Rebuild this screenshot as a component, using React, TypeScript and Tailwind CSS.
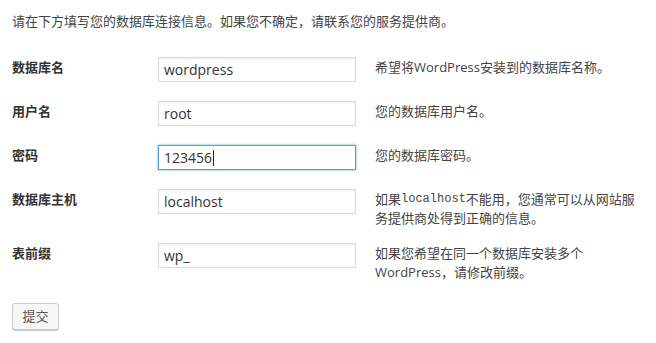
import React from "react";

const font = {
  fontFamily: '"Open Sans", "Noto Sans CJK SC", sans-serif',
};

type Row = {
  label: string;
  value: string;
  focused?: boolean;
  desc: React.ReactNode;
  pb: string;
};

export default function App() {
  const rows: Row[] = [
    { label: "数据库名", value: "wordpress", desc: "希望将WordPress安装到的数据库名称。", pb: "pb-[19px]" },
    { label: "用户名", value: "root", desc: "您的数据库用户名。", pb: "pb-[19px]" },
    { label: "密码", value: "123456", focused: true, desc: "您的数据库密码。", pb: "pb-[19px]" },
    {
      label: "数据库主机",
      value: "localhost",
      desc: (
        <>
          如果<code className="inline-block align-top font-['Liberation_Mono',monospace] text-[12px] leading-[19px]">localhost</code>不能用，您通常可以从网站服务提供商处得到正确的信息。
        </>
      ),
      pb: "pb-[15px]",
    },
    { label: "表前缀", value: "wp_", desc: "如果您希望在同一个数据库安装多个WordPress，请修改前缀。", pb: "pb-[21px]" },
  ];

  return (
    <div className="w-[656px] h-[343px] bg-white text-[#444] overflow-hidden" style={font}>
      <div className="pl-3 pt-[12px]">
        <p className="text-[13px] leading-[19px]">请在下方填写您的数据库连接信息。如果您不确定，请联系您的服务提供商。</p>
        <div className="mt-[26px] flex flex-col">
          {rows.map((r) => (
            <div key={r.label} className={`flex items-start ${r.pb}`}>
              <div className="w-[146px] shrink-0 pt-[1px] text-[13px] leading-[19px] font-bold text-[#333]">{r.label}</div>
              <div
                className={`w-[198px] h-[25px] shrink-0 flex items-center pl-[5px] text-[14px] text-[#333] bg-white border ${
                  r.focused
                    ? "border-[#5b9dd9] shadow-[0_0_2px_rgba(30,140,190,0.8)]"
                    : "border-[#ddd] shadow-[inset_0_1px_2px_rgba(0,0,0,0.07)]"
                }`}
              >
                <span>{r.value}</span>
                {r.focused && <span className="w-px h-[16px] bg-[#222] ml-[1px]" />}
              </div>
              <div className="ml-[19px] w-[266px] pt-[1px] text-[13px] leading-[19px] text-[#444]">{r.desc}</div>
            </div>
          ))}
        </div>
        <button className="w-[47px] h-[27px] rounded-[3px] border border-[#ccc] bg-[#f7f7f7] text-[13px] text-[#555] shadow-[0_1px_0_#ccc]">
          提交
        </button>
      </div>
    </div>
  );
}
